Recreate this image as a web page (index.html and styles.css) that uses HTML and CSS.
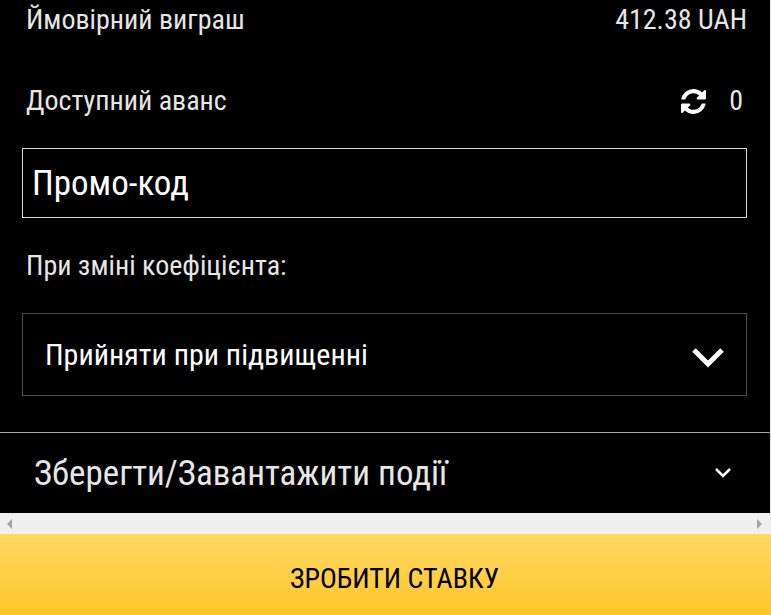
FILE: index.html
```html
<!DOCTYPE html>
<html lang="uk">
<head>
    <meta charset="UTF-8">
    <meta name="viewport" content="width=device-width, initial-scale=1.0">
    <title>Купон</title>
    <link rel="stylesheet" href="styles.css">
</head>
<body>
    <form class="coupon">
        <div class="coupon-body">
            <div class="row">
                <span>Ймовірний виграш</span>
                <span>412.38 UAH</span>
            </div>
            <div class="row">
                <span>Доступний аванс</span>
                <span class="advance">
                    <button type="button" class="refresh" aria-label="Оновити">
                        <svg viewBox="0 0 1536 1536" width="25" height="25" fill="currentColor">
                            <path d="M1511 928q0 5-1 7-64 268-268 434.500T764 1536q-146 0-282.500-55T238 1324l-129 129q-19 19-45 19t-45-19-19-45V960q0-26 19-45t45-19h448q26 0 45 19t19 45-19 45l-137 137q71 66 161 102t187 36q134 0 250-65t186-179q11-17 53-117 8-23 30-23h192q13 0 22.500 9.500t9.500 22.500zm25-800v448q0 26-19 45t-45 19h-448q-26 0-45-19t-19-45 19-45l138-138Q969 256 768 256q-134 0-250 65T332 500q-11 17-53 117-8 23-30 23H50q-13 0-22.500-9.500T18 608v-7q65-268 270-434.500T768 0q146 0 284 55.500T1297 212l130-129q19-19 45-19t45 19 19 45z"/>
                        </svg>
                    </button>
                    <span>0</span>
                </span>
            </div>

            <input class="promo" type="text" placeholder="Промо-код" aria-label="Промо-код">

            <label class="label" for="oddsChange">При зміні коефіцієнта:</label>
            <div class="select">
                <select id="oddsChange">
                    <option>Прийняти при підвищенні</option>
                </select>
                <svg class="select-arrow" viewBox="0 0 32 20" width="32" height="20" fill="none" stroke="currentColor" stroke-width="5">
                    <path d="M2 2l14 14L30 2"/>
                </svg>
            </div>
        </div>

        <button type="button" class="accordion">
            <span>Зберегти/Завантажити події</span>
            <svg viewBox="0 0 16 10" width="16" height="10" fill="none" stroke="currentColor" stroke-width="2.500">
                <path d="M1 1l7 7 7-7"/>
            </svg>
        </button>

        <div class="scrollbar" aria-hidden="true">
            <svg viewBox="0 0 5 10" width="5" height="10" fill="currentColor"><path d="M5 0v10L0 5z"/></svg>
            <svg viewBox="0 0 5 10" width="5" height="10" fill="currentColor"><path d="M0 0v10l5-5z"/></svg>
        </div>

        <button type="submit" class="submit">ЗРОБИТИ СТАВКУ</button>
    </form>
</body>
</html>
```
FILE: styles.css
```css
* {
    box-sizing: border-box;
}

body {
    margin: 0;
    background-color: #000;
    color: #e6e6e6;
    font-family: "Roboto Condensed", Roboto, sans-serif;
    font-size: 28px;
    line-height: 40px;
}

button, input, select {
    margin: 0;
    font-family: inherit;
    color: inherit;
}

.coupon {
    display: flex;
    flex-direction: column;
}

.coupon-body {
    padding: 0 23px 36px 22px;
    border-right: 1px solid #e6e6e6;
}

.row {
    display: flex;
    justify-content: space-between;
    padding: 0 0 0 4px;
    margin-bottom: 41px;
}

.row + .row {
    padding-right: 4px;
    margin-bottom: 27px;
}

.advance {
    display: flex;
    align-items: center;
    gap: 23px;
}

.refresh {
    display: flex;
    padding: 0;
    border: 0;
    background: none;
    color: #fff;
}

.promo {
    display: block;
    width: 100%;
    height: 70px;
    padding: 0 9px;
    border: 1px solid #d9d9d9;
    border-radius: 0;
    background-color: #000;
    color: #fff;
    font-size: 35px;
}

.promo::placeholder {
    color: #fff;
    opacity: 1;
}

.label {
    display: block;
    margin: 28px 0 27px;
    padding-left: 4px;
}

.select {
    position: relative;
}

.select select {
    display: block;
    width: 100%;
    height: 83px;
    padding: 0 70px 0 22px;
    border: 1px solid #4d4d4d;
    border-radius: 0;
    background-color: #000;
    color: #fff;
    font-size: 30px;
    appearance: none;
}

.select-arrow {
    position: absolute;
    top: 35px;
    right: 23px;
    color: #fff;
    pointer-events: none;
}

.accordion {
    display: flex;
    justify-content: space-between;
    align-items: center;
    height: 81px;
    padding: 0 39px 0 34px;
    border: 0;
    border-top: 1px solid #a6a6a6;
    border-right: 1px solid #e6e6e6;
    background: none;
    font-size: 35px;
}

.accordion svg {
    color: #fff;
}

.scrollbar {
    display: flex;
    justify-content: space-between;
    align-items: center;
    height: 21px;
    padding: 0 9px 0 7px;
    background-color: #f0f0f0;
    color: #a3a3a3;
}

.submit {
    height: 81px;
    padding: 8px 0 0 18px;
    border: 0;
    background: linear-gradient(to bottom, #ffd863, #ffc629);
    color: #000;
    font-size: 28px;
}
```
